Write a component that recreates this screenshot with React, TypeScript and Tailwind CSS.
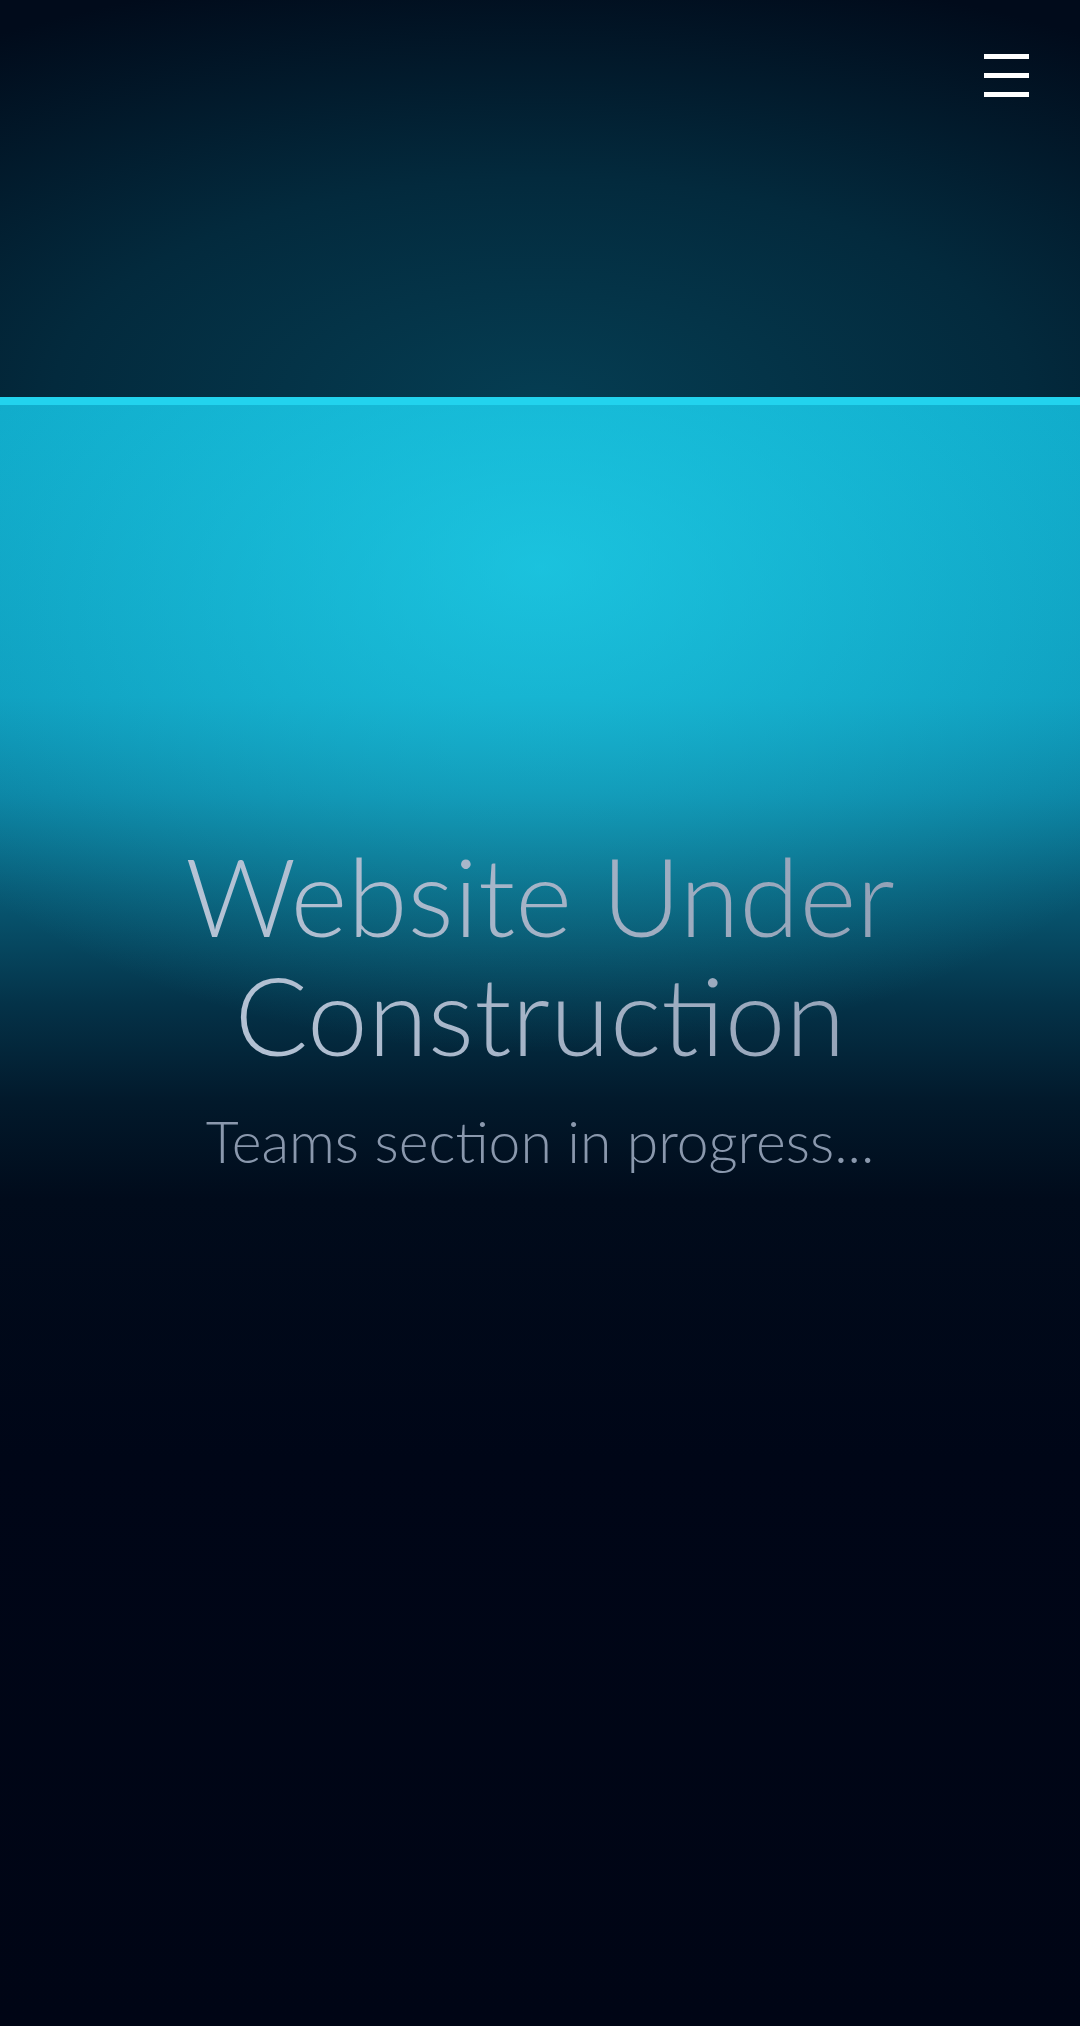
import React from 'react'

export default function App() {
  return (
    <div className="flex min-h-screen w-full flex-col bg-[#000515] font-['Lato',sans-serif]">
      <header className="flex h-[405px] w-full justify-end border-b-8 border-[#22d3ee] bg-[radial-gradient(ellipse_90%_110%_at_50%_100%,#053d52_0%,#032a3d_50%,#010b1b_100%)] pr-[51px] pt-[54px]">
        <button className="flex h-[43px] w-[45px] flex-col justify-between" aria-label="Menu">
          <span className="block h-[5px] w-full bg-white" />
          <span className="block h-[5px] w-full bg-white" />
          <span className="block h-[5px] w-full bg-white" />
        </button>
      </header>
      <main className="flex h-[1621px] w-full flex-col items-center bg-[radial-gradient(ellipse_70%_30%_at_50%_10%,rgba(36,218,242,0.6)_0%,rgba(36,218,242,0)_100%),linear-gradient(180deg,#0ea6c6_0%,#0d98b9_18%,#0b80a0_24%,#085a75_30%,#043248_37%,#02192b_43%,#010b1b_49%,#000617_65%,#000515_100%)] pt-[430px] text-center">
        <h1 className="bg-[linear-gradient(90deg,#b6c4d6,#93a2b7)] bg-clip-text text-[109px] leading-[119px] font-light text-transparent">
          Website Under
          <br />
          Construction
        </h1>
        <p className="mt-[34px] text-[57px] leading-[68px] font-light text-[#8a98ad]">Teams section in progress...</p>
      </main>
    </div>
  )
}
